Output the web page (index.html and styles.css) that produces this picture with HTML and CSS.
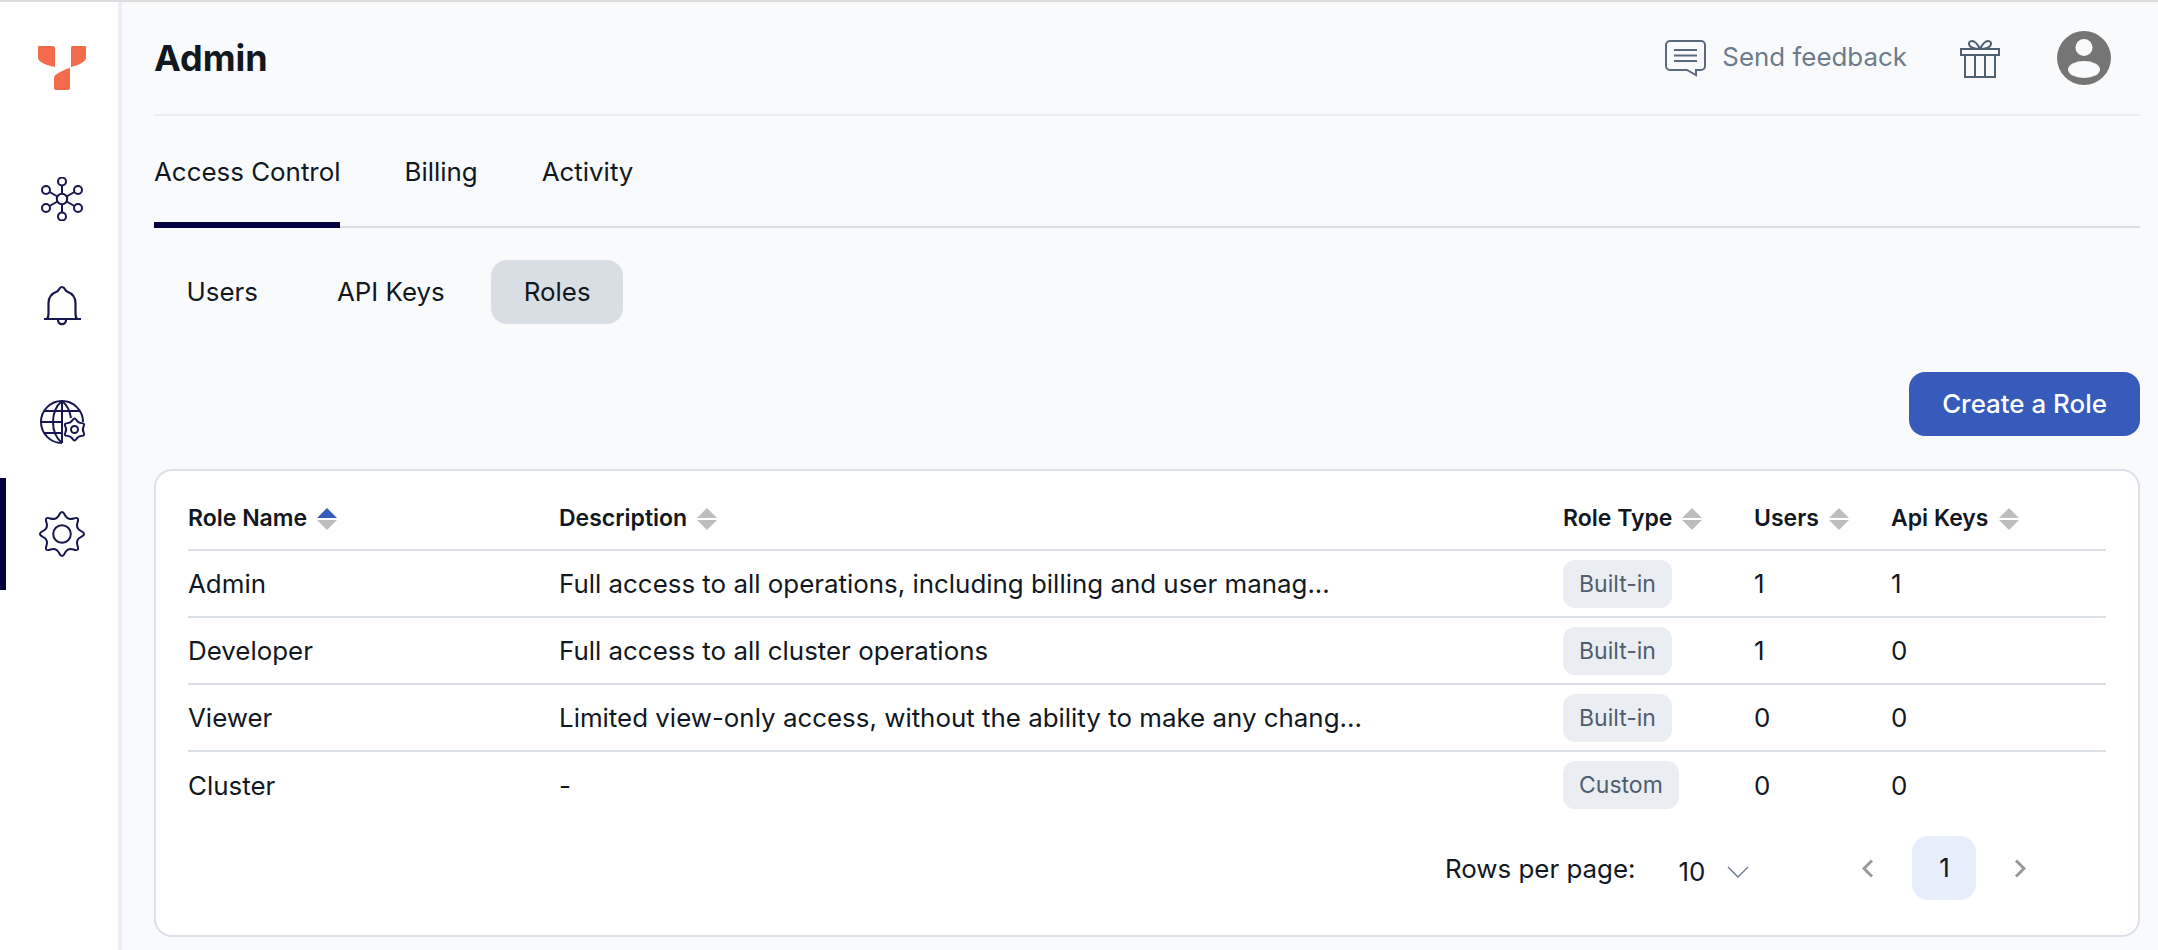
FILE: index.html
```html
<!DOCTYPE html>
<html lang="en">
<head>
<meta charset="utf-8">
<title>Admin</title>
<link rel="stylesheet" href="styles.css">
</head>
<body>
<div class="app">
  <nav class="sidebar">
    <svg class="logo" width="48" height="44" viewBox="0 0 48 44"><path fill="#f26b4a" d="M1 0h14a2 2 0 0 1 2 2v19c-6-1-11-3-14-5-2-1-3-3-3-5V1a1 1 0 0 1 1-1zM34 0h13a1 1 0 0 1 1 1v10c0 2-1 4-3 5-3 2-7 4-12 5V2a2 2 0 0 1 1-2zM32 22v20a2 2 0 0 1-2 2H18a2 2 0 0 1-2-2V33c0-3 1-4 3-5 3-2 8-5 13-6z"/></svg>
    <div class="nav-item first">
      <svg width="44" height="44" viewBox="0 0 44 44" fill="none" stroke="#16174f" stroke-width="2"><circle cx="22" cy="22" r="5.2"/><circle cx="22" cy="4.5" r="4"/><circle cx="22" cy="39.5" r="4"/><circle cx="6" cy="13" r="4"/><circle cx="38" cy="13" r="4"/><circle cx="6" cy="31" r="4"/><circle cx="38" cy="31" r="4"/><path d="M22 8.500V17M22 27v8.500M9.500 15l8 4.500M34.500 15l-8 4.500M9.500 29l8-4.500M34.500 29l-8-4.500"/></svg>
    </div>
    <div class="nav-item bell">
      <svg width="44" height="44" viewBox="0 0 44 44" fill="none" stroke="#16174f" stroke-width="2.200"><path d="M4 36h37M7 36c1-1 1.500-3 1.500-6V20c0-7 4.500-10 8.500-11.500 2-.7 2-4.500 5-4.500s3 3.800 5 4.500c4 1.500 8.500 4.500 8.500 11.500v10c0 3 .5 5 1.500 6"/><path d="M18 37c0 5.500 8 5.500 8 0"/></svg>
    </div>
    <div class="nav-item globe">
      <svg width="48" height="48" viewBox="0 0 48 48" fill="none" stroke="#16174f" stroke-width="2"><path d="M24 45a21 21 0 1 1 21-21"/><path d="M24 3c-6 5-9 13-9 21s3 16 9 21M24 3c5 4 8 10 9 17M24 3v42M6 13h36M3 24h21M6 35h18"/><g transform="translate(36.500 31.500)"><path fill="#fff" d="M-1.875-9.500Q0-12.500 1.875-9.500T7.290-6.375 9.165-3.125 9.165 3.125 7.290 6.375 1.875 9.500-1.875 9.500-7.290 6.375-9.165 3.125-9.165-3.125-7.290-6.375-1.875-9.500z"/><circle r="3.500"/></g></svg>
    </div>
    <div class="nav-item active">
      <svg width="48" height="48" viewBox="0 0 48 48" fill="none" stroke="#16174f" stroke-width="2"><circle cx="24" cy="24" r="8.800"/><path d="M21.220 4.800Q24-1 26.780 4.800T35.620 8.460 39.540 12.380 43.200 21.220 43.200 26.780 39.540 35.620 35.620 39.540 26.780 43.200 21.220 43.200 12.380 39.540 8.460 35.620 4.800 26.780 4.800 21.220 8.460 12.380 12.380 8.460 21.220 4.800z"/></svg>
    </div>
  </nav>
  <main class="main">
    <header class="topbar">
      <h1 class="title">Admin</h1>
      <div class="top-actions">
        <div class="feedback">
          <svg width="41" height="37" viewBox="0 0 41 37" fill="none" stroke="#5b6b7d" stroke-width="2"><path d="M5 1h31a4 4 0 0 1 4 4v21a4 4 0 0 1-4 4h-5v5l-9-5H5a4 4 0 0 1-4-4V5a4 4 0 0 1 4-4z"/><path d="M9 10h23M9 15.500h23M9 21h23"/></svg>
          <span class="feedback-label">Send feedback</span>
        </div>
        <svg class="gift" width="40" height="39" viewBox="0 0 40 39" fill="none" stroke="#4f6073" stroke-width="2"><path d="M1 10h38v6H1zM5 16h30v22H5zM15 16v22M25 16v22M20 10c-2-4-5-8-8-8-5 0-5 8 8 8zM20 10c2-4 5-8 8-8 5 0 5 8-8 8z"/></svg>
        <svg class="avatar" width="54" height="54" viewBox="0 0 54 54"><circle cx="27" cy="27" r="27" fill="#757575"/><circle cx="27" cy="16.500" r="8.500" fill="#f9fafc"/><ellipse cx="27" cy="38.500" rx="16" ry="8.500" fill="#f9fafc"/></svg>
      </div>
    </header>
    <div class="tabs">
      <a class="tab current">Access Control</a>
      <a class="tab">Billing</a>
      <a class="tab">Activity</a>
    </div>
    <div class="subtabs">
      <a class="subtab">Users</a>
      <a class="subtab">API Keys</a>
      <a class="subtab selected">Roles</a>
    </div>
    <div class="toolbar"><button class="primary">Create a Role</button></div>
    <section class="card">
      <table class="roles">
        <colgroup><col class="c-name"><col class="c-desc"><col class="c-type"><col class="c-users"><col class="c-keys"></colgroup>
        <thead>
          <tr>
            <th>Role Name<svg class="sort" width="20" height="24" viewBox="0 0 20 24"><path class="up on" d="M10 1l10 10H0z"/><path class="dn" d="M0 13h20L10 23z"/></svg></th>
            <th>Description<svg class="sort" width="20" height="24" viewBox="0 0 20 24"><path class="up" d="M10 1l10 10H0z"/><path class="dn" d="M0 13h20L10 23z"/></svg></th>
            <th>Role Type<svg class="sort" width="20" height="24" viewBox="0 0 20 24"><path class="up" d="M10 1l10 10H0z"/><path class="dn" d="M0 13h20L10 23z"/></svg></th>
            <th>Users<svg class="sort" width="20" height="24" viewBox="0 0 20 24"><path class="up" d="M10 1l10 10H0z"/><path class="dn" d="M0 13h20L10 23z"/></svg></th>
            <th>Api Keys<svg class="sort" width="20" height="24" viewBox="0 0 20 24"><path class="up" d="M10 1l10 10H0z"/><path class="dn" d="M0 13h20L10 23z"/></svg></th>
          </tr>
        </thead>
        <tbody>
          <tr><td>Admin</td><td>Full access to all operations, including billing and user manag...</td><td><span class="badge">Built-in</span></td><td>1</td><td>1</td></tr>
          <tr><td>Developer</td><td>Full access to all cluster operations</td><td><span class="badge">Built-in</span></td><td>1</td><td>0</td></tr>
          <tr><td>Viewer</td><td>Limited view-only access, without the ability to make any chang...</td><td><span class="badge">Built-in</span></td><td>0</td><td>0</td></tr>
          <tr><td>Cluster</td><td>-</td><td><span class="badge">Custom</span></td><td>0</td><td>0</td></tr>
        </tbody>
      </table>
      <div class="pager">
        <span class="rows-label">Rows per page:</span>
        <span class="rows-value">10</span>
        <svg class="rows-caret" width="22" height="12" viewBox="0 0 22 12" fill="none" stroke="#6b7a8a" stroke-width="1.400"><path d="M1 1l10 10L21 1"/></svg>
        <svg class="prev" width="13" height="19" viewBox="0 0 13 19" fill="none" stroke="#9a9a9a" stroke-width="3"><path d="M11 1.500l-8 8 8 8"/></svg>
        <span class="page">1</span>
        <svg class="next" width="13" height="19" viewBox="0 0 13 19" fill="none" stroke="#9a9a9a" stroke-width="3"><path d="M2 1.500l8 8-8 8"/></svg>
      </div>
    </section>
  </main>
</div>
</body>
</html>
```
FILE: styles.css
```css
* { box-sizing: border-box; }
html, body { margin: 0; height: 100%; }
body {
  font-family: Inter, "Liberation Sans", sans-serif;
  font-size: 25.9px;
  color: #12181f;
  background: #f9fafc;
  overflow: hidden;
}
.app { display: flex; height: 950px; border-top: 2px solid #dcdcdc; }
.sidebar {
  width: 122px;
  flex: none;
  background: #fff;
  border-right: 4px solid #ebedf2;
  padding-left: 6px;
  display: flex;
  flex-direction: column;
  align-items: center;
}
.logo { margin-top: 44px; }
.nav-item {
  width: 100%;
  height: 112px;
  display: flex;
  align-items: center;
  justify-content: center;
  position: relative;
}
.nav-item.first { margin-top: 53px; }
.nav-item.bell { padding-bottom: 12px; }
.nav-item.globe { padding-bottom: 3px; }
.nav-item.active { margin-top: -1px; }
.nav-item.active::before {
  content: "";
  position: absolute;
  left: -6px; top: 0; bottom: 0;
  width: 6px;
  background: #02023f;
}
.main { flex: 1; min-width: 0; padding: 0 18px 0 32px; }
.topbar {
  height: 114px;
  border-bottom: 2px solid #ebedf2;
  display: flex;
  align-items: center;
  justify-content: space-between;
}
.title { margin: 0; font-size: 36px; font-weight: 700; }
.top-actions { display: flex; align-items: center; padding-right: 29px; }
.feedback { display: flex; align-items: center; gap: 16px; color: #6d7b8b; margin-right: 53px; }
.feedback-label { padding-bottom: 3px; }
.gift { margin-right: 57px; }
.tabs { display: flex; gap: 64px; height: 112px; border-bottom: 2px solid #d8dde5; }
.tab { height: 112px; padding-top: 39px; line-height: 34px; }
.tab.current { border-bottom: 6px solid #02023f; }
.subtabs { display: flex; gap: 14px; margin-top: 32px; }
.subtab { height: 64px; padding: 0 32.5px; line-height: 64px; border-radius: 16px; }
.subtab.selected { background: #d9dde4; }
.toolbar { display: flex; justify-content: flex-end; margin-top: 48px; }
.primary {
  height: 64px;
  width: 231px;
  padding: 0 0 2px;
  border: 0;
  border-radius: 16px;
  background: #375bbb;
  color: #fff;
  font: 500 25.9px Inter, sans-serif;
}
.card {
  margin-top: 33px;
  height: 468px;
  background: #fff;
  border: 2px solid #dce0e8;
  border-radius: 18px;
  padding: 0 32px;
}
.roles { width: 100%; table-layout: fixed; border-collapse: collapse; }
.c-name { width: 371px; }
.c-desc { width: 1004px; }
.c-type { width: 191px; }
.c-users { width: 137px; }
th { height: 79px; text-align: left; font-size: 23px; font-weight: 600; padding: 16px 0 0; border-bottom: 2px solid #dbdfe6; }
td { height: 67px; padding: 0; border-bottom: 2px solid #dbdfe6; }
tbody tr:last-child td { border-bottom: 0; }
.sort { margin-left: 10px; vertical-align: -5px; }
.up, .dn { fill: #bdbdbd; }
.up.on { fill: #375bbb; }
.badge {
  display: inline-block;
  height: 48px;
  padding: 0 16px;
  line-height: 48px;
  border-radius: 12px;
  background: #eaedf2;
  color: #4f5d6e;
  font-size: 23px;
}
.pager { display: flex; align-items: center; height: 64px; margin-top: 18px; }
.rows-label { margin-left: 1257px; }
.rows-value { margin-left: 43px; padding-top: 7px; }
.rows-caret { margin: 7px 0 0 22px; }
.prev { margin-left: 112px; }
.page {
  width: 64px; height: 64px; margin-left: 38px;
  border-radius: 16px;
  background: #e6edfb;
  text-align: center;
  line-height: 64px;
}
.next { margin-left: 38px; }
```
